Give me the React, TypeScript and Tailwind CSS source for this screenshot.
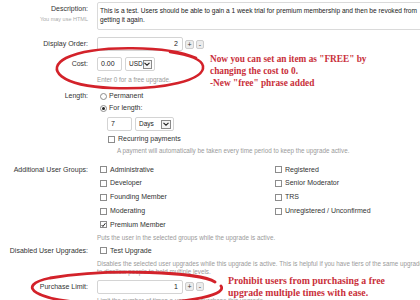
import React from 'react';

// Admin form for a user upgrade, with hand drawn red notes laid over it
const font = "font-['Liberation_Sans',Arial,sans-serif]";

function Label({ children, className = '' }: { children?: React.ReactNode; className?: string }) {
  return <div className={`w-[88px] shrink-0 text-right text-[7px] leading-[10px] text-[#333] ${className}`}>{children}</div>;
}

function Hint({ children, className = '' }: { children: React.ReactNode; className?: string }) {
  return <div className={`text-[6.3px] leading-[8px] text-[#9a9a9a] whitespace-nowrap ${className}`}>{children}</div>;
}

function Spinner({ value }: { value: string }) {
  return (
    <div className="flex items-center gap-[2px]">
      <div className="flex h-[14px] w-[86px] items-center justify-end rounded-[2px] border border-[#d4d4d4] bg-white pr-[4px] text-[7px] text-[#222]">{value}</div>
      <span className="flex h-[9px] w-[9px] items-center justify-center rounded-[2px] border border-[#cdcdcd] bg-[#ececec] text-[7px] leading-none text-[#333]">+</span>
      <span className="flex h-[9px] w-[8px] items-center justify-center rounded-[2px] border border-[#cdcdcd] bg-[#ececec] text-[7px] leading-none text-[#333]">-</span>
    </div>
  );
}

function SelectBox({ text, width }: { text: string; width: string }) {
  return (
    <div className={`flex h-[14px] items-center justify-between rounded-[2px] border border-[#d4d4d4] bg-white pl-[3px] pr-[2px] text-[6.5px] text-[#222] ${width}`}>
      <span>{text}</span>
      <span className="flex h-[9px] w-[10px] items-center justify-center border border-[#8a8a8a] bg-[#f4f4f4]">
        <svg width="6" height="4" viewBox="0 0 6 4"><path d="M0.5 0.8 L3 3.2 L5.5 0.8" fill="none" stroke="#222" strokeWidth="1.1" /></svg>
      </span>
    </div>
  );
}

function Radio({ checked }: { checked?: boolean }) {
  return (
    <span className="flex h-[7px] w-[7px] items-center justify-center rounded-full border border-[#8c8c8c] bg-white">
      {checked && <span className="h-[3px] w-[3px] rounded-full bg-[#222]" />}
    </span>
  );
}

function Check({ label, checked }: { label: string; checked?: boolean }) {
  return (
    <div className="flex h-[13.75px] items-center gap-[3px] text-[7px] text-[#333]">
      <span className="flex h-[7px] w-[7px] items-center justify-center border border-[#8c8c8c] bg-white">
        {checked && (
          <svg width="6" height="6" viewBox="0 0 6 6"><path d="M0.8 3 L2.3 4.8 L5.3 0.8" fill="none" stroke="#222" strokeWidth="1.2" /></svg>
        )}
      </span>
      <span>{label}</span>
    </div>
  );
}

export default function App() {
  return (
    <div className={`relative h-[300px] w-[420px] overflow-hidden bg-white ${font}`}>
      <div className="flex flex-col pt-[2px]">
        {/* Description */}
        <div className="flex gap-[9px]">
          <div className="w-[88px] shrink-0 pt-[1.5px] text-right">
            <div className="text-[7px] leading-[10px] text-[#333]">Description:</div>
            <div className="mt-[1px] text-[5.5px] leading-[8px] text-[#aaa]">You may use HTML</div>
          </div>
          <div className="h-[28px] w-[340px] shrink-0 rounded-[2px] border border-[#dadada] bg-white pl-[2px] pt-[3px] text-[6.6px] leading-[9px] text-[#222]">
            <div className="whitespace-nowrap">This is a test. Users should be able to gain a 1 week trial for premium membership and then be revoked from</div>
            <div>getting it again.</div>
          </div>
        </div>

        {/* Display order */}
        <div className="mt-[7px] flex items-center gap-[9px]">
          <Label>Display Order:</Label>
          <Spinner value="2" />
        </div>

        {/* Cost */}
        <div className="mt-[6px] flex items-center gap-[9px]">
          <Label>Cost:</Label>
          <div className="flex items-center gap-[3px]">
            <div className="flex h-[14px] w-[25px] items-center rounded-[2px] border border-[#d4d4d4] bg-white pl-[3px] text-[7px] text-[#222]">0.00</div>
            <SelectBox text="USD" width="w-[30px]" />
          </div>
        </div>
        <div className="mt-[5px] flex gap-[9px]">
          <Label />
          <Hint>Enter 0 for a free upgrade.</Hint>
        </div>

        {/* Length */}
        <div className="mt-[6px] flex gap-[9px]">
          <Label className="pt-[1px]">Length:</Label>
          <div className="flex flex-col pl-[3px] text-[7px] text-[#333]">
            <div className="flex h-[12px] items-center gap-[2px]"><Radio /><span>Permanent</span></div>
            <div className="flex h-[12px] items-center gap-[2px]"><Radio checked /><span>For length:</span></div>
            <div className="mt-[3px] flex items-center gap-[3px] pl-[7px]">
              <div className="flex h-[14px] w-[25px] items-center rounded-[2px] border border-[#d4d4d4] bg-white pl-[3px] text-[7px] text-[#222]">7</div>
              <SelectBox text="Days" width="w-[39px]" />
            </div>
            <div className="mt-[3px] flex h-[10px] items-center gap-[3px] pl-[8px]">
              <span className="h-[7px] w-[7px] border border-[#8c8c8c] bg-white" />
              <span>Recurring payments</span>
            </div>
            <Hint className="mt-[3px] pl-[17px]">A payment will automatically be taken every time period to keep the upgrade active.</Hint>
          </div>
        </div>

        {/* Additional user groups */}
        <div className="mt-[8px] flex gap-[9px]">
          <Label className="pt-[2px]">Additional User Groups:</Label>
          <div className="flex flex-col">
            <div className="flex pl-[3px]">
              <div className="w-[175px]">
                <Check label="Administrative" />
                <Check label="Developer" />
                <Check label="Founding Member" />
                <Check label="Moderating" />
                <Check label="Premium Member" checked />
              </div>
              <div>
                <Check label="Registered" />
                <Check label="Senior Moderator" />
                <Check label="TRS" />
                <Check label="Unregistered / Unconfirmed" />
              </div>
            </div>
            <Hint className="mt-[2px]">Puts the user in the selected groups while the upgrade is active.</Hint>
          </div>
        </div>

        {/* Disabled upgrades */}
        <div className="mt-[3px] flex gap-[9px]">
          <Label className="pt-[1px]">Disabled User Upgrades:</Label>
          <div className="flex min-w-0 flex-col">
            <div className="flex h-[12px] items-center gap-[3px] pl-[3px] text-[7px] text-[#333]">
              <span className="h-[7px] w-[7px] border border-[#8c8c8c] bg-white" />
              <span>Test Upgrade</span>
            </div>
            <Hint className="mt-[3px]">Disables the selected user upgrades while this upgrade is active. This is helpful if you have tiers of the same upgrade</Hint>
            <Hint>to disallow people to hold multiple levels.</Hint>
          </div>
        </div>

        {/* Purchase limit */}
        <div className="mt-[4px] flex items-center gap-[9px]">
          <Label>Purchase Limit:</Label>
          <Spinner value="1" />
        </div>
        <div className="mt-[3px] flex gap-[9px]">
          <Label />
          <Hint>Limit the number of times a user can purchase this upgrade.</Hint>
        </div>
      </div>

      {/* hand drawn marks */}
      <svg className="pointer-events-none absolute left-0 top-0" width="420" height="300" viewBox="0 0 420 300">
        <path d="M196 58 C 170 46, 95 44, 66 58 C 45 69, 60 86, 112 88 C 165 90, 205 80, 203 66 C 202 60, 190 55, 170 52" fill="none" stroke="#d3222a" strokeWidth="2.6" strokeLinecap="round" />
        <path d="M215 282 C 200 272, 110 268, 50 278 C 15 285, 30 302, 110 304 C 180 305, 228 296, 221 286" fill="none" stroke="#d3222a" strokeWidth="2.8" strokeLinecap="round" />
      </svg>

      <div className="pointer-events-none absolute left-[210px] top-[53px] whitespace-nowrap font-['Liberation_Serif','Times_New_Roman',serif] text-[9.3px] font-bold leading-[12px] text-[#c9303a]">
        <div>Now you can set an item as "FREE" by</div>
        <div>changing the cost to 0.</div>
        <div>-New "free" phrase added</div>
      </div>
      <div className="pointer-events-none absolute left-[228px] top-[275px] whitespace-nowrap font-['Liberation_Serif','Times_New_Roman',serif] text-[9.8px] font-bold leading-[12px] text-[#c9303a]">
        <div>Prohibit users from purchasing a free</div>
        <div>upgrade multiple times with ease.</div>
      </div>
    </div>
  );
}
